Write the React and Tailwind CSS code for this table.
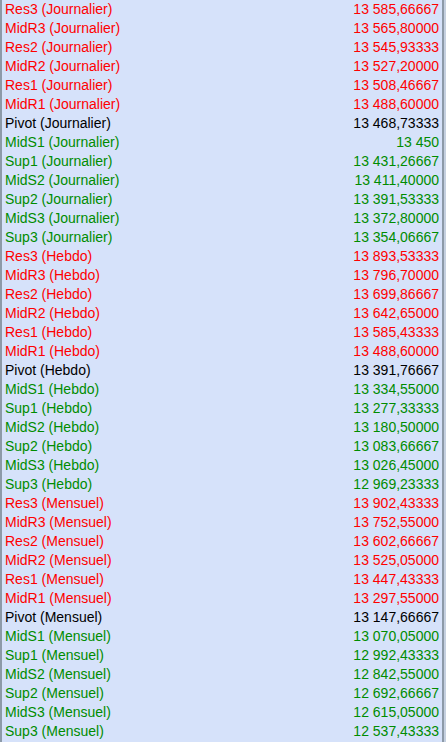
const RED = "text-[#ff0000]";
const GREEN = "text-[#008c00]";
const BLACK = "text-black";

const rows = [
  ["Res3 (Journalier)", "13 585,66667", RED],
  ["MidR3 (Journalier)", "13 565,80000", RED],
  ["Res2 (Journalier)", "13 545,93333", RED],
  ["MidR2 (Journalier)", "13 527,20000", RED],
  ["Res1 (Journalier)", "13 508,46667", RED],
  ["MidR1 (Journalier)", "13 488,60000", RED],
  ["Pivot (Journalier)", "13 468,73333", BLACK],
  ["MidS1 (Journalier)", "13 450", GREEN],
  ["Sup1 (Journalier)", "13 431,26667", GREEN],
  ["MidS2 (Journalier)", "13 411,40000", GREEN],
  ["Sup2 (Journalier)", "13 391,53333", GREEN],
  ["MidS3 (Journalier)", "13 372,80000", GREEN],
  ["Sup3 (Journalier)", "13 354,06667", GREEN],
  ["Res3 (Hebdo)", "13 893,53333", RED],
  ["MidR3 (Hebdo)", "13 796,70000", RED],
  ["Res2 (Hebdo)", "13 699,86667", RED],
  ["MidR2 (Hebdo)", "13 642,65000", RED],
  ["Res1 (Hebdo)", "13 585,43333", RED],
  ["MidR1 (Hebdo)", "13 488,60000", RED],
  ["Pivot (Hebdo)", "13 391,76667", BLACK],
  ["MidS1 (Hebdo)", "13 334,55000", GREEN],
  ["Sup1 (Hebdo)", "13 277,33333", GREEN],
  ["MidS2 (Hebdo)", "13 180,50000", GREEN],
  ["Sup2 (Hebdo)", "13 083,66667", GREEN],
  ["MidS3 (Hebdo)", "13 026,45000", GREEN],
  ["Sup3 (Hebdo)", "12 969,23333", GREEN],
  ["Res3 (Mensuel)", "13 902,43333", RED],
  ["MidR3 (Mensuel)", "13 752,55000", RED],
  ["Res2 (Mensuel)", "13 602,66667", RED],
  ["MidR2 (Mensuel)", "13 525,05000", RED],
  ["Res1 (Mensuel)", "13 447,43333", RED],
  ["MidR1 (Mensuel)", "13 297,55000", RED],
  ["Pivot (Mensuel)", "13 147,66667", BLACK],
  ["MidS1 (Mensuel)", "13 070,05000", GREEN],
  ["Sup1 (Mensuel)", "12 992,43333", GREEN],
  ["MidS2 (Mensuel)", "12 842,55000", GREEN],
  ["Sup2 (Mensuel)", "12 692,66667", GREEN],
  ["MidS3 (Mensuel)", "12 615,05000", GREEN],
  ["Sup3 (Mensuel)", "12 537,43333", GREEN],
];

export default function App() {
  return (
    <div className="w-[446px] h-[742px] overflow-hidden flex bg-[#d6e2fa] font-['Liberation_Sans',Arial,sans-serif] text-[14px]">
      <div className="w-[2px] bg-[#8d9aa8] shrink-0" />
      <div className="flex-1 flex flex-col pl-[3px] pr-[3px] -mt-[1px]">
        {rows.map(([label, value, color]) => (
          <div key={label} className={`h-[19px] flex items-center justify-between leading-none ${color}`}>
            <span>{label}</span>
            <span>{value}</span>
          </div>
        ))}
      </div>
      <div className="w-[2px] bg-[#8d9aa8] shrink-0" />
      <div className="w-[2px] bg-[#c5d0e0] shrink-0" />
    </div>
  );
}
